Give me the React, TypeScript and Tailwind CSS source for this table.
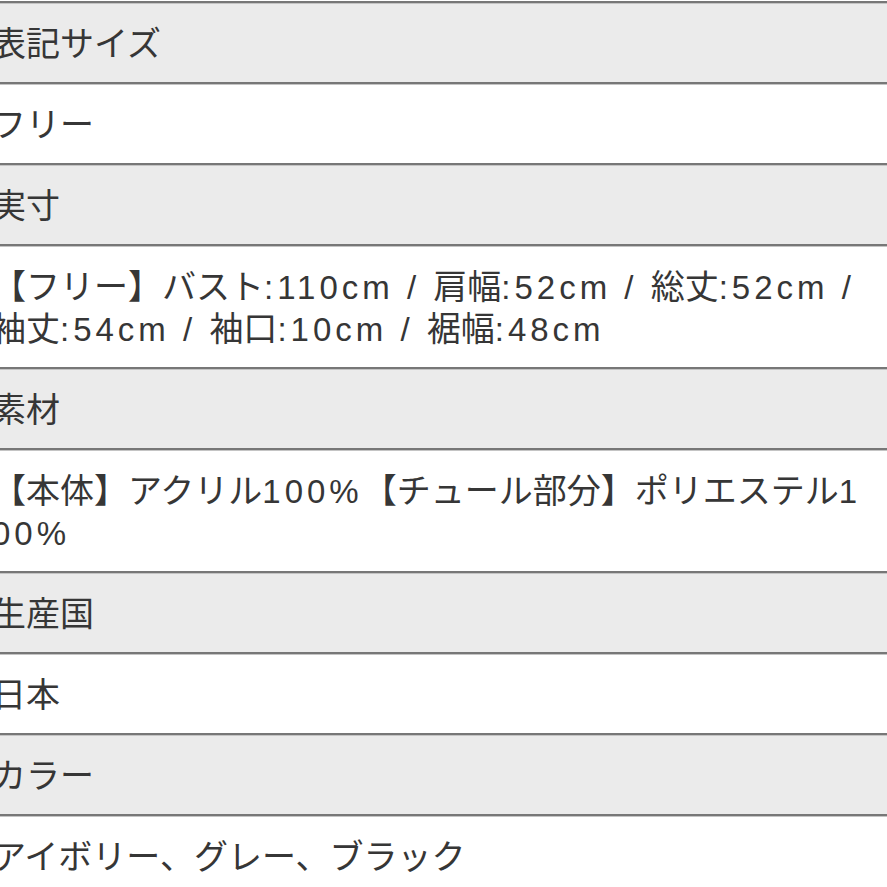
import React from "react";

type Row = { kind: "h" | "v"; lines: string[] };

const rows: Row[] = [
  { kind: "h", lines: ["表記サイズ"] },
  { kind: "v", lines: ["フリー"] },
  { kind: "h", lines: ["実寸"] },
  {
    kind: "v",
    lines: [
      "【フリー】バスト:110cm / 肩幅:52cm / 総丈:52cm /",
      "袖丈:54cm / 袖口:10cm / 裾幅:48cm",
    ],
  },
  { kind: "h", lines: ["素材"] },
  {
    kind: "v",
    lines: ["【本体】アクリル100%【チュール部分】ポリエステル1", "00%"],
  },
  { kind: "h", lines: ["生産国"] },
  { kind: "v", lines: ["日本"] },
  { kind: "h", lines: ["カラー"] },
  { kind: "v", lines: ["アイボリー、グレー、ブラック"] },
];

function Line({ text }: { text: string }) {
  const parts = text.split(/([\x20-\x7e]+)/).filter((p) => p.length > 0);
  return (
    <div className="whitespace-pre h-[42px]">
      {parts.map((p, i) =>
        /^[\x20-\x7e]+$/.test(p) ? (
          <span
            key={i}
            className="font-['Liberation_Sans',Arial,sans-serif] text-[33px] leading-none tracking-[4px]"
          >
            {p}
          </span>
        ) : (
          <span key={i}>{p}</span>
        )
      )}
    </div>
  );
}

function Sep() {
  return (
    <div className="flex flex-col">
      <div className="h-[2px] bg-[#777777]" />
      <div className="h-px bg-[#c4c4c4]" />
    </div>
  );
}

export default function App() {
  return (
    <div className="w-[887px] h-[887px] overflow-hidden bg-white text-[#363636] font-['Noto_Sans_CJK_JP','Noto_Sans',sans-serif]">
      <div className="h-px bg-white" />
      <Sep />
      {rows.map((r, i) => (
        <div key={i}>
          <div
            className={`py-[18px] ${r.kind === "h" ? "bg-[#ebebeb]" : "bg-white"}`}
          >
            <div className="-ml-2 -mt-px mb-px text-[34px] leading-[42px]">
              {r.lines.map((l, j) => (
                <Line key={j} text={l} />
              ))}
            </div>
          </div>
          <Sep />
        </div>
      ))}
    </div>
  );
}
